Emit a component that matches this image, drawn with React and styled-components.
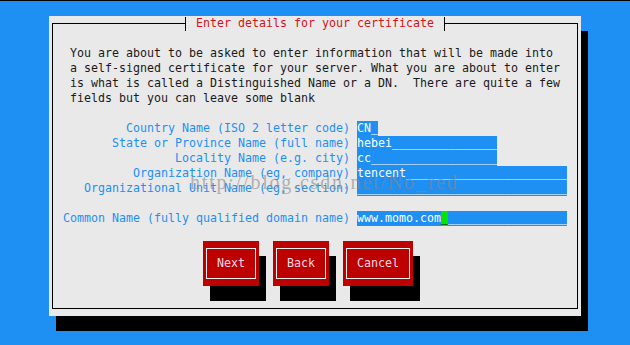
import React from 'react';
import styled, { createGlobalStyle } from 'styled-components';

const BLUE = '#1e8ff3';
const GREY = '#e9e9e9';

const Global = createGlobalStyle`
  html, body { margin: 0; padding: 0; background: ${BLUE}; }
  body { width: 630px; height: 345px; overflow: hidden; }
`;

const Screen = styled.div`
  height: 345px;
  box-sizing: border-box;
  border-top: 1px solid #000;
  padding: 15px 0 0 49px;
  font-family: "DejaVu Sans Mono", monospace;
  font-size: 11.63px;
  line-height: 15px;
`;

const Dialog = styled.div`
  position: relative;
  width: 532px;
  height: 300px;
  box-sizing: border-box;
  padding: 7px 3px;
  background: ${GREY};
  box-shadow: 7px 15px 0 #000;
`;

const Frame = styled.div`
  position: relative;
  height: 100%;
  box-sizing: border-box;
  border: 1px solid #000;
`;

const Title = styled.div`
  position: absolute;
  top: -8px;
  left: 129px;
  display: flex;
  height: 15px;
  background: ${GREY};
`;

const Tee = styled.span`
  position: relative;
  width: 7px;
  height: 15px;
  &::before {
    content: '';
    position: absolute;
    left: 3px;
    top: 1px;
    width: 1px;
    height: 14px;
    background: #000;
  }
  &::after {
    content: '';
    position: absolute;
    top: 7px;
    left: ${p => (p.$side === 'left' ? '0' : '3px')};
    width: 4px;
    height: 1px;
    background: #000;
  }
`;

const TitleText = styled.span`
  white-space: pre;
  color: #d2141c;
`;

const Intro = styled.div`
  margin: 22px 0 0 17px;
  white-space: pre;
  color: #1a1a1a;
`;

const Form = styled.div`
  margin-top: 15px;
  display: flex;
  flex-direction: column;
`;

const Row = styled.div`
  display: flex;
  gap: 7px;
  height: 15px;
  margin-top: ${p => (p.$spaced ? '15px' : '0')};
`;

const Label = styled.span`
  width: 297px;
  text-align: right;
  white-space: pre;
  color: ${BLUE};
`;

const Field = styled.span`
  display: block;
`;

const FieldText = styled.span`
  white-space: pre;
  color: #fff;
  background: ${BLUE};
  padding-bottom: 1px;
`;

const Cursor = styled.span`
  white-space: pre;
  color: #000;
  background: #00e600;
  padding-bottom: 1px;
`;

const Buttons = styled.div`
  margin: 15px 0 0 150px;
  display: flex;
  gap: 14px;
`;

const Button = styled.div`
  width: ${p => p.$cols * 7}px;
  height: 45px;
  box-sizing: border-box;
  padding: 7px 3px;
  background: #bd0000;
  box-shadow: 7px 15px 0 #000;
`;

const ButtonFace = styled.div`
  height: 100%;
  box-sizing: border-box;
  border: 1px solid #f2f2f2;
  display: flex;
  align-items: center;
  justify-content: center;
  color: #f4dce8;
`;

const Watermark = styled.div`
  position: absolute;
  left: 141px;
  top: 156px;
  font-family: "Liberation Serif", serif;
  font-size: 20px;
  line-height: 20px;
  letter-spacing: 1.8px;
  color: rgba(135, 135, 135, 0.6);
  white-space: pre;
  pointer-events: none;
`;

const introText = [
  'You are about to be asked to enter information that will be made into',
  'a self-signed certificate for your server. What you are about to enter',
  'is what is called a Distinguished Name or a DN.  There are quite a few',
  'fields but you can leave some blank',
].join('\n');

const fields = [
  { label: 'Country Name (ISO 2 letter code)', value: 'CN', width: 3 },
  { label: 'State or Province Name (full name)', value: 'hebei', width: 20 },
  { label: 'Locality Name (e.g. city)', value: 'cc', width: 20 },
  { label: 'Organization Name (eg, company)', value: 'tencent', width: 30 },
  { label: 'Organizational Unit Name (eg, section)', value: '', width: 30 },
  { label: 'Common Name (fully qualified domain name)', value: 'www.momo.com', width: 30, focused: true, spaced: true },
];

function InputField({ value, width, focused }) {
  if (focused) {
    const rest = width - value.length - 1;
    return (
      <Field>
        <FieldText>{value}</FieldText>
        <Cursor>_</Cursor>
        <FieldText>{'_'.repeat(rest)}</FieldText>
      </Field>
    );
  }
  return (
    <Field>
      <FieldText>{value + '_'.repeat(width - value.length)}</FieldText>
    </Field>
  );
}

export default function App() {
  return (
    <>
      <Global />
      <Screen>
        <Dialog>
          <Frame>
            <Title>
              <Tee $side="left" />
              <TitleText> Enter details for your certificate </TitleText>
              <Tee $side="right" />
            </Title>
            <Intro>{introText}</Intro>
            <Form>
              {fields.map(f => (
                <Row key={f.label} $spaced={f.spaced}>
                  <Label>{f.label}</Label>
                  <InputField value={f.value} width={f.width} focused={f.focused} />
                </Row>
              ))}
            </Form>
            <Buttons>
              <Button $cols={8}><ButtonFace>Next</ButtonFace></Button>
              <Button $cols={8}><ButtonFace>Back</ButtonFace></Button>
              <Button $cols={10}><ButtonFace>Cancel</ButtonFace></Button>
            </Buttons>
          </Frame>
          <Watermark>http://blog.csdn.net/No_red</Watermark>
        </Dialog>
      </Screen>
    </>
  );
}
